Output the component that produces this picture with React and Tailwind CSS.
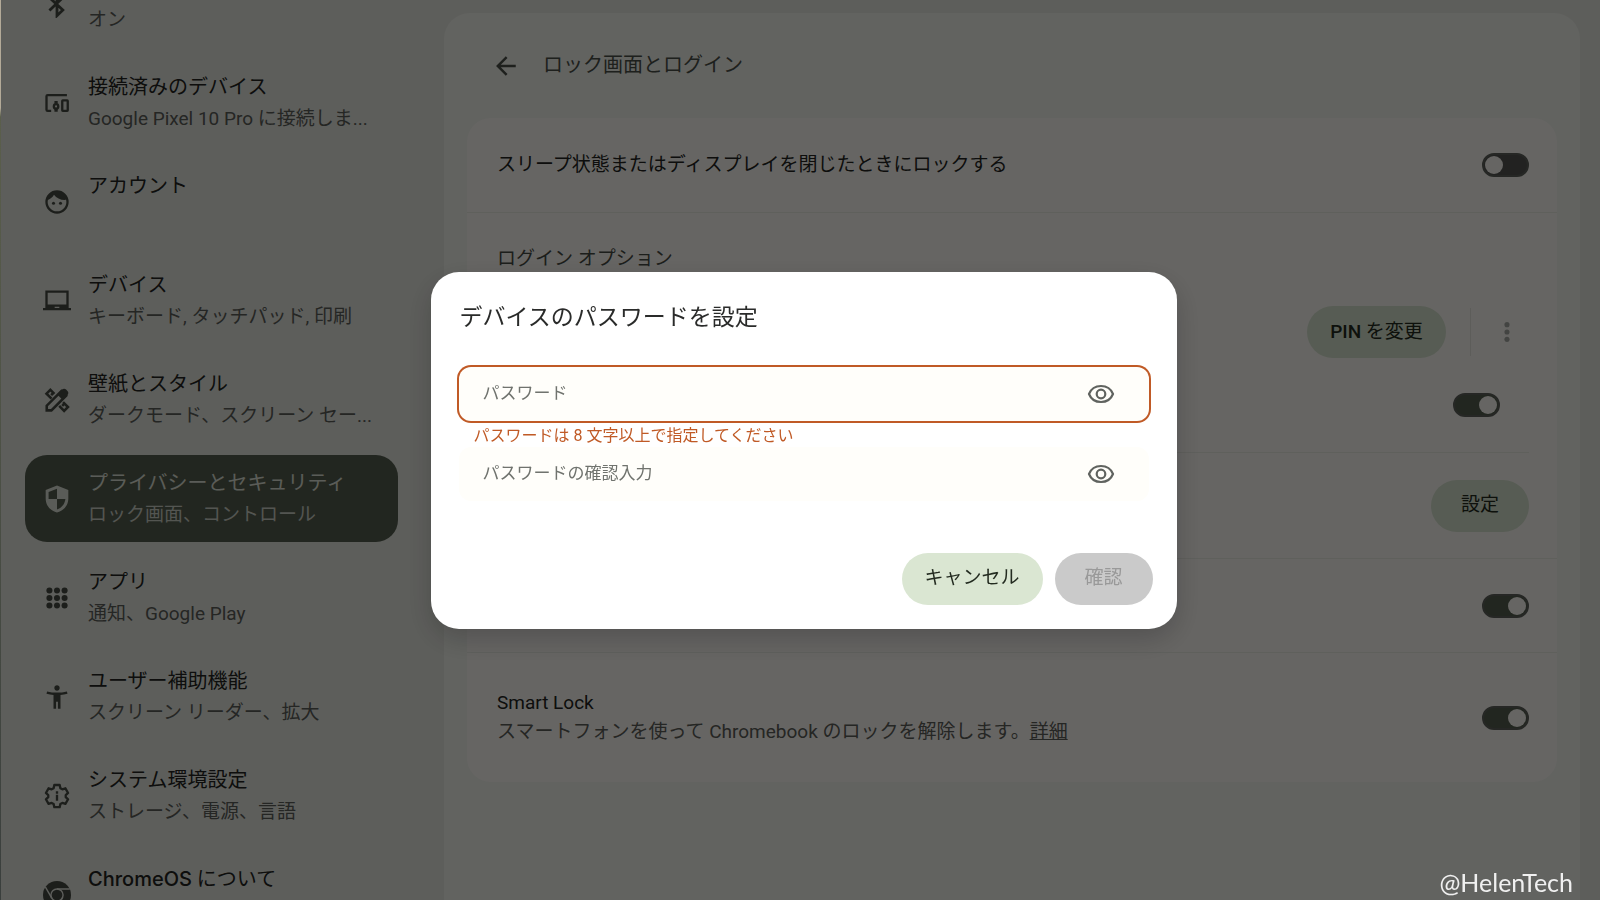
import { useState } from 'react';

const FONT = "font-['Roboto','Noto_Sans_CJK_JP',sans-serif]";

function Icon({ children, className = 'size-7' }) {
  return (
    <svg viewBox="0 0 24 24" fill="currentColor" className={`shrink-0 ${className}`} aria-hidden="true">
      {children}
    </svg>
  );
}

const navItems = [
  {
    id: 'bluetooth',
    title: '',
    sub: 'オン',
    icon: (
      <path
        d="M5.500 17.500L17 6.500 12 2v20l5-4.800L5.500 6.500"
        fill="none"
        stroke="currentColor"
        strokeWidth="2.400"
      />
    ),
  },
  {
    id: 'devices',
    title: '接続済みのデバイス',
    sub: 'Google Pixel 10 Pro に接続しま...',
    icon: (
      <g fill="none" stroke="currentColor" strokeWidth="2">
        <path d="M20.500 5.300H4a1 1 0 0 0-1 1v11.400a1 1 0 0 0 1 1h3" />
        <rect x="16.500" y="9.800" width="4.700" height="8.900" rx=".4" />
        <circle cx="11.200" cy="14.900" r="1.900" />
        <path d="M11.200 10.200v2.500M11.200 17v2.600" strokeWidth="2.800" />
      </g>
    ),
  },
  {
    id: 'accounts',
    title: 'アカウント',
    sub: '',
    icon: (
      <>
        <path fillRule="evenodd" d="M12 2a10 10 0 1 0 0 20 10 10 0 0 0 0-20zm0 18a8 8 0 0 1-7.800-9.800c2.300-.9 4.100-2.500 5.200-4.500 2.100 2.800 5.400 4.500 9.100 4.500.4 0 .9 0 1.300-.1A8 8 0 0 1 12 20z" />
        <circle cx="9" cy="13" r="1.300" />
        <circle cx="15" cy="13" r="1.300" />
      </>
    ),
  },
  {
    id: 'device',
    title: 'デバイス',
    sub: 'キーボード, タッチパッド, 印刷',
    icon: <path fillRule="evenodd" d="M22 18V3H2v15H0v2h24v-2h-2zm-8 0h-4v-1h4v1zm6-3H4V5h16v10z" />,
  },
  {
    id: 'personalization',
    title: '壁紙とスタイル',
    sub: 'ダークモード、スクリーン セー...',
    icon: (
      <>
        <g fill="none" stroke="currentColor" strokeWidth="2.200">
          <path d="M9.800 6.800L6.300 3.300 3 6.600l4.300 4.300M8.600 6.200L7 7.800" />
          <path d="M17.200 13.800l4.200 4.200-3.300 3.300-4.200-4.200M18 15.500l-1.600 1.600" />
          <path d="M3.200 20.900v-4L15.800 4.300l4 4L7.200 20.900z" />
        </g>
        <path d="M12.200 7.200l3.900-3.900c1.200-1.200 2.700-1.200 3.700-.2l1.200 1.200c1 1 1 2.500-.2 3.700l-3.900 3.900z" />
      </>
    ),
  },
  {
    id: 'privacy',
    title: 'プライバシーとセキュリティ',
    sub: 'ロック画面、コントロール',
    active: true,
    icon: <path fillRule="evenodd" d="M12 .5L2.300 4.200v7.300c0 6 4.100 10.600 9.700 12 5.600-1.400 9.700-6 9.700-12V4.200L12 .5zM12 3.200v8.800h7.200c-.5 4.300-3.300 7.700-7.200 9V12H4.800V5.900L12 3.200z" />,
  },
  {
    id: 'apps',
    title: 'アプリ',
    sub: '通知、Google Play',
    icon: [5.5, 12, 18.5].map((y) => [5.5, 12, 18.5].map((x) => <circle key={`${x}-${y}`} cx={x} cy={y} r="2.600" />)),
  },
  {
    id: 'accessibility',
    title: 'ユーザー補助機能',
    sub: 'スクリーン リーダー、拡大',
    icon: <path d="M12 2c1.300 0 2.300 1 2.300 2.300s-1 2.300-2.300 2.300-2.300-1-2.300-2.300S10.700 2 12 2zm9 7.200c-2 .5-4 .8-6 1V22h-2.200v-6h-1.600v6H9V10.200c-2-.2-4-.5-6-1l.5-2c2.800.7 5.600 1 8.500 1s5.700-.3 8.500-1l.5 2z" />,
  },
  {
    id: 'system',
    title: 'システム環境設定',
    sub: 'ストレージ、電源、言語',
    icon: (
      <>
        <path
          d="M9.700 3h4.600l.6 2.700 1.700 1 2.600-.9 2.300 4-2 1.800v1.800l2 1.800-2.300 4-2.600-.9-1.700 1-.6 2.700H9.700l-.6-2.700-1.700-1-2.600.9-2.300-4 2-1.800v-1.800l-2-1.800 2.300-4 2.600.9 1.700-1z"
          transform="translate(0 -.4)"
          fill="none"
          stroke="currentColor"
          strokeWidth="2"
          strokeLinejoin="round"
        />
        <path d="M11 11h2v5h-2zM11 8h2v2h-2z" />
      </>
    ),
  },
  {
    id: 'about',
    title: (
      <>
        <span className="font-['Inter'] font-medium">ChromeOS</span> について
      </>
    ),
    sub: '',
    icon: (
      <>
        <circle cx="12" cy="12" r="12" />
        <g fill="none" stroke="#e9ebe4" strokeWidth="1.200">
          <circle cx="12" cy="12" r="5.200" />
          <path d="M12 6.800h11M7.500 14.600L2 5M16.500 14.600L11 24" />
        </g>
      </>
    ),
  },
];

function Sidebar() {
  return (
    <nav className="w-[443px] shrink-0 overflow-hidden pl-6">
      <ul className="-mt-10 flex w-[373px] flex-col gap-3">
        {navItems.map((item) => (
          <li key={item.id}>
            <a
              href="#"
              aria-current={item.active ? 'page' : undefined}
              className={`flex h-[87px] items-center gap-[17px] rounded-[22px] pl-[18px] ${
                item.active ? 'bg-[#555f50] text-[#e2e6dc]' : 'text-[#484d44]'
              }`}
            >
              <Icon>{item.icon}</Icon>
              <span className="flex h-16 flex-col whitespace-nowrap">
                <span className={`h-8 text-[20px] leading-8 ${item.active ? 'text-[#e2e6dc]' : 'text-[#232522]'}`}>
                  {item.title}
                </span>
                <span className={`h-8 text-[19px] leading-8 ${item.active ? 'text-[#d0d4cb]' : 'text-[#5c5f5a]'}`}>
                  {item.sub}
                </span>
              </span>
            </a>
          </li>
        ))}
      </ul>
    </nav>
  );
}

function Toggle({ label, defaultChecked = false }) {
  return (
    <input
      type="checkbox"
      role="switch"
      aria-label={label}
      defaultChecked={defaultChecked}
      className="h-6 w-[47px] shrink-0 appearance-none rounded-full border-2 border-[#5f635c] bg-[#555653] p-px before:block before:size-[18px] before:rounded-full before:bg-[#fffdf8] checked:bg-[#555f50] checked:before:ml-[23px]"
    />
  );
}

function PillButton({ children, className = '', ...props }) {
  return (
    <button type="button" className={`h-[52px] rounded-full text-[19px] whitespace-nowrap ${className}`} {...props}>
      {children}
    </button>
  );
}

function LockSettings() {
  return (
    <main className="mt-[13px] mr-5 min-w-0 grow rounded-t-[26px] bg-[#f5f7f0] px-[23px]">
      <header className="flex h-[105px] items-center pl-[26px] text-[#4c5149]">
        <button type="button" aria-label="戻る">
          <Icon className="size-[26px]">
            <path d="M21 10.800H7.200l6.200-6.200L11.800 3l-9 9 9 9 1.600-1.600-6.200-6.200H21z" />
          </Icon>
        </button>
        <h1 className="pb-[2px] pl-6 text-[20px] leading-[30px]">ロック画面とログイン</h1>
      </header>

      <section className="rounded-[24px] bg-[#fffdf8]">
        <div className="flex h-[95px] items-center justify-between border-b border-[#eeefe7] pr-7 pl-[30px]">
          <span className="text-[19px] text-[#232522]">スリープ状態またはディスプレイを閉じたときにロックする</span>
          <Toggle label="スリープ状態またはディスプレイを閉じたときにロックする" />
        </div>

        <div className="border-b border-[#eeefe7] pr-7 pl-[30px]">
          <h2 className="pt-[31px] text-[19px] leading-[30px] text-[#484c45]">ログイン オプション</h2>
          <div className="flex h-[179px] flex-col items-end border-b border-[#eeefe7] pt-8">
            <div className="mr-2 flex items-center">
              <PillButton className="w-[139px] bg-[#dae6d2] text-[#232b20]">
                <span className="font-medium">PIN</span> を変更
              </PillButton>
              <span className="ml-6 h-12 w-px bg-[#e9e9e2]" />
              <button type="button" aria-label="その他" className="ml-[22px] text-[#a9aaa5]">
                <Icon>
                  <circle cx="12" cy="5.700" r="2.200" />
                  <circle cx="12" cy="12" r="2.200" />
                  <circle cx="12" cy="18.300" r="2.200" />
                </Icon>
              </button>
            </div>
            <div className="mt-[35px] mr-[29px] flex">
              <Toggle label="PIN の自動送信" defaultChecked />
            </div>
          </div>
          <div className="flex h-[105px] items-center justify-end">
            <PillButton className="w-[98px] bg-[#dae6d2] text-[#232b20]">設定</PillButton>
          </div>
        </div>

        <div className="flex h-[94px] items-center justify-end border-b border-[#eeefe7] pr-7">
          <Toggle label="通知をロック画面に表示" defaultChecked />
        </div>

        <div className="flex h-[129px] items-center justify-between pr-7 pl-[30px]">
          <div className="pb-px text-[19px] leading-[29px]">
            <div className="text-[#232522]">Smart Lock</div>
            <p className="text-[#5c5f5a]">
              スマートフォンを使って Chromebook のロックを解除します。
              <a href="#" className="underline">詳細</a>
            </p>
          </div>
          <Toggle label="Smart Lock" defaultChecked />
        </div>
      </section>
    </main>
  );
}

function PasswordField({ id, label, error }) {
  const [visible, setVisible] = useState(false);

  return (
    <div>
      <div className={`flex h-[54px] items-center rounded-[12px] bg-[#fffefa] pr-[33px] pl-6 ${error ? 'ring-2 ring-[#c05a26]' : ''}`}>
        <input
          id={id}
          type={visible ? 'text' : 'password'}
          placeholder={label}
          aria-label={label}
          aria-invalid={Boolean(error)}
          className="min-w-0 grow text-[17px] outline-none placeholder:text-[#70736e]"
        />
        <button type="button" aria-label="パスワードを表示" onClick={() => setVisible(!visible)} className="text-[#60635f]">
          <svg viewBox="0 0 30 24" className="h-6 w-[30px]" fill="none" stroke="currentColor" strokeWidth="2.200">
            <path d="M3 12C5 7 9.500 4 15 4s10 3 12 8c-2 5-6.500 8-12 8S5 17 3 12z" strokeLinejoin="round" />
            <circle cx="15" cy="12" r="4.300" />
          </svg>
        </button>
      </div>
      {error && <p className="pt-1 pl-[15px] text-[16px] leading-[22px] text-[#c05a26]">{error}</p>}
    </div>
  );
}

function PasswordDialog() {
  return (
    <div className="fixed inset-y-0 right-0 left-px flex items-center justify-center bg-black/60 pl-[6px]">
      <div
        role="dialog"
        aria-modal="true"
        aria-labelledby="dialog-title"
        className="w-[746px] rounded-[28px] bg-white pb-6 shadow-[0_10px_28px_rgba(0,0,0,0.2)]"
      >
        <h2 id="dialog-title" className="px-[29px] pt-[29px] text-[23px] leading-[34px] text-[#2a2b2a]">
          デバイスのパスワードを設定
        </h2>
        <form className="px-7 pt-8">
          <PasswordField id="password" label="パスワード" error="パスワードは 8 文字以上で指定してください" />
          <PasswordField id="password-confirm" label="パスワードの確認入力" />
        </form>
        <div className="flex justify-end gap-3 pt-[52px] pr-6">
          <PillButton className="w-[141px] bg-[#dae6d2] text-[#232b20]">キャンセル</PillButton>
          <PillButton className="w-[98px] bg-[#cacaca] text-[#999999]" disabled>確認</PillButton>
        </div>
      </div>
    </div>
  );
}

export default function App() {
  return (
    <div lang="ja" className={`flex h-screen overflow-hidden bg-[#e9ebe4] ${FONT}`}>
      <div className="w-px shrink-0 bg-linear-to-b from-[#b3aa98] from-12% via-[#5b5f4c] via-13% to-[#3a3f3d]" />
      <Sidebar />
      <LockSettings />
      <PasswordDialog />
      <div className="fixed right-[27px] bottom-0 font-['Lato'] text-[25px] leading-[36px] text-[#f0f0f0]">@HelenTech</div>
    </div>
  );
}
